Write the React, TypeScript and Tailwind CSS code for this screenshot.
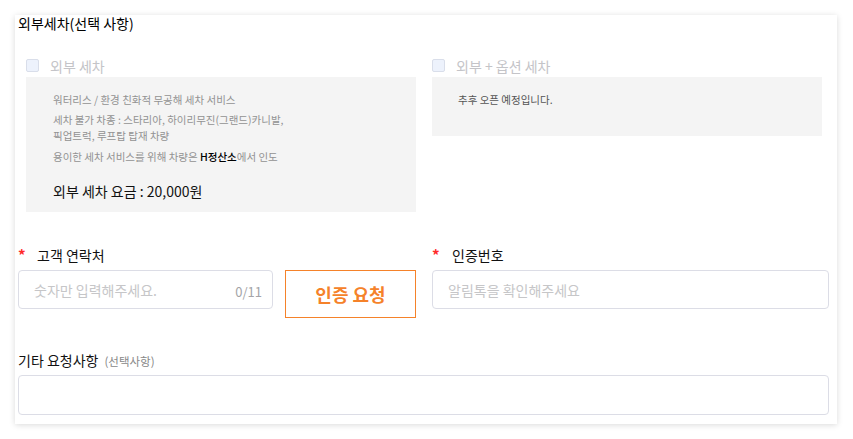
import React from "react";

const font = { fontFamily: '"Noto Sans CJK KR", "Noto Sans", sans-serif' };

function Check({ label }: { label: string }) {
  return (
    <div className="flex items-start h-[20px]">
      <span className="mt-[2px] w-[13px] h-[13px] rounded-[2px] border border-[#d9deea] bg-[#edf2fc]" />
      <span className="ml-[11px] text-[14px] leading-[18px] text-[#c4c4c8]">{label}</span>
    </div>
  );
}

export default function App() {
  return (
    <div className="min-h-[439px] bg-white" style={font}>
      <div className="pt-[15px] pl-[15px]">
        <div className="w-[822px] h-[409px] bg-white shadow-[0_1px_6px_rgba(0,0,0,0.15)] pl-[3px] pr-[8px]">
          <div className="text-[14px] leading-[16px] text-black">외부세차(선택 사항)</div>

          <div className="mt-[26px] pl-[8px] grid grid-cols-[390px_390px] gap-x-[16px]">
            <div>
              <Check label="외부 세차" />
              <div className="h-[135px] bg-[#f4f4f4] pt-[15px] pl-[27px] text-[10.5px] leading-[16px] text-[#929292]">
                <p>워터리스 / 환경 친화적 무공해 세차 서비스</p>
                <p className="mt-[4px]">
                  세차 불가 차종 : 스타리아, 하이리무진(그랜드)카니발,
                  <br />
                  픽업트럭, 루프탑 탑재 차량
                </p>
                <p className="mt-[5px]">
                  용이한 세차 서비스를 위해 차량은 <span className="text-black font-medium">H정산소</span>에서 인도
                </p>
                <p className="mt-[16px] text-[14px] leading-[20px] text-[#111]">
                  외부 세차 요금 : 20,000원
                </p>
              </div>
            </div>
            <div>
              <Check label="외부 + 옵션 세차" />
              <div className="h-[59px] bg-[#f4f4f4] pt-[15px] pl-[26px] text-[10.5px] leading-[16px] text-[#555]">
                <p>추후 오픈 예정입니다.</p>
              </div>
            </div>
          </div>

          <div className="mt-[33px] grid grid-cols-[398px_397px] gap-x-[16px]">
            <div>
              <div className="flex items-center h-[20px] text-[14px] leading-[20px]">
                <span className="text-[#ff2a2a] w-[19px] text-[15px] font-bold">*</span>
                <span className="text-[#111]">고객 연락처</span>
              </div>
              <div className="mt-[5px] flex items-start gap-[12px]">
                <div className="w-[255px] h-[39px] rounded-[4px] border border-[#dcdde6] flex items-center justify-between pl-[15px] pr-[10px]">
                  <span className="text-[14px] text-[#c6c6c8] leading-[20px]">숫자만 입력해주세요.</span>
                  <span className="text-[13px] text-[#a4a4a8] leading-[20px] mt-[5px]">0/11</span>
                </div>
                <div className="w-[131px] h-[48px] border border-[#f5822a] flex items-center justify-center text-[18px] font-bold text-[#f5822a]">
                  인증 요청
                </div>
              </div>
            </div>
            <div>
              <div className="flex items-center h-[20px] text-[14px] leading-[20px]">
                <span className="text-[#ff2a2a] w-[20px] text-[15px] font-bold">*</span>
                <span className="text-[#111]">인증번호</span>
              </div>
              <div className="mt-[5px] w-[397px] h-[39px] rounded-[4px] border border-[#dcdde6] flex items-center pl-[15px]">
                <span className="text-[14px] text-[#c6c6c8] leading-[20px]">알림톡을 확인해주세요</span>
              </div>
            </div>
          </div>

          <div className="mt-[32px] flex items-end h-[20px]">
            <span className="text-[14px] leading-[20px] text-[#111]">기타 요청사항</span>
            <span className="ml-[6px] text-[11.5px] leading-[18px] text-[#888]">(선택사항)</span>
          </div>
          <div className="mt-[5px] w-[811px] h-[40px] rounded-[4px] border border-[#dcdde6]" />
        </div>
      </div>
    </div>
  );
}
